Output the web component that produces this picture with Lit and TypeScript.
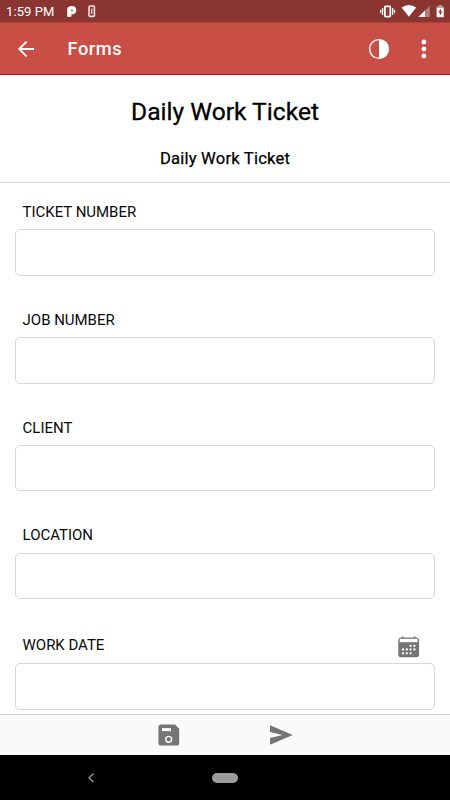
import { LitElement, html, css, svg } from "lit";
import { customElement, property } from "lit/decorators.js";

@customElement("status-bar")
class StatusBar extends LitElement {
  static styles = css`
    :host { display: flex; align-items: center; height: 22px; background: #8b3530; color: #fff; }
    .time { margin-left: 6px; width: 61px; font-size: 13px; line-height: 22px; letter-spacing: 0.1px; padding-top: 1px; white-space: nowrap; }
    svg { display: block; flex: none; }
    .space { flex: 1; }
  `;
  render() {
    return html`
      <span class="time">1:59 PM</span>
      <svg width="34" height="22" viewBox="67 0 34 22">
        <path d="M67.2 16.2V9.5Q67.2 6 71.8 6Q76.3 6 76.3 10Q76.3 14.2 72.2 14.2H71.4V15.9Q71.4 17 70.2 17H68.2Q67.2 17 67.2 16.2Z" fill="#fff"/>
        <path d="M71.2 11.2V10.3Q71.2 9.4 72 9.4Q72.8 9.4 72.8 10.3Q72.8 11.2 72 11.2Z" fill="#8b3530"/>
        <rect x="89" y="6" width="5.4" height="10.4" rx="1" fill="none" stroke="#f0e2e1" stroke-width="1.6"/>
        <path d="M91.7 8.5V14" stroke="#f0e2e1" stroke-width="1.2"/>
      </svg>
      <span class="space"></span>
      <svg width="70" height="22" viewBox="380 0 70 22">
        <rect x="384.9" y="6.4" width="5.4" height="10.2" rx=".6" fill="none" stroke="#fff" stroke-width="1.7"/>
        <path d="M382.6 8V15M392.6 8V15M380.7 9.8V13.2M394.5 9.8V13.2" stroke="#fff" stroke-width="1.3"/>
        <path d="M401.6 7.6Q408.9 2.6 416.2 7.6L408.9 16.8Z" fill="#fff"/>
        <path d="M429.8 5.7V17H418.4Z" fill="#b57c79"/>
        <path d="M425 10.4V17H418.4Z" fill="#fff"/>
        <path d="M436.6 6.6H438.5V5.3H442V6.6H443.8V8H436.6Z" fill="#c9a09e"/>
        <path d="M436.6 8H443.8V17.2H436.6Z" fill="#fff"/>
        <path d="M440.9 8.4L438.2 12.6H439.8V15.8L442.5 11.4H440.9Z" fill="#8b3530"/>
      </svg>
    `;
  }
}

@customElement("app-header")
class AppHeader extends LitElement {
  static styles = css`
    :host { display: flex; align-items: center; box-sizing: border-box; height: 53px; background: #c84e46; border-top: 1px solid #ab433c; border-bottom: 1px solid #c00a0b; color: #fff; padding-left: 15px; }
    svg { display: block; flex: none; }
    .title { flex: 1; margin-left: 30.5px; font-size: 18.3px; font-weight: 500; letter-spacing: 0.5px; line-height: 22px; padding-top: 1px; }
  `;
  render() {
    return html`
      <svg width="22" height="22" viewBox="15 38 22 22" fill="none" stroke="#fff" stroke-width="1.9">
        <path d="M34 49H19.3M26.6 41.6L19.2 49L26.6 56.4"/>
      </svg>
      <span class="title">Forms</span>
      <svg width="82" height="24" viewBox="368 37 82 24">
        <circle cx="379" cy="49" r="9.4" fill="none" stroke="#fff" stroke-width="1.4"/>
        <path d="M379 39.6A9.4 9.4 0 0 1 379 58.4Z" fill="#fff"/>
        <circle cx="423.9" cy="42" r="2.4" fill="#fff"/>
        <circle cx="423.9" cy="49" r="2.4" fill="#fff"/>
        <circle cx="423.9" cy="56" r="2.4" fill="#fff"/>
      </svg>
    `;
  }
}

@customElement("form-field")
class FormField extends LitElement {
  @property() label = "";
  @property({ type: Boolean }) date = false;

  static styles = css`
    :host { display: block; padding: 0 15px; }
    .row { display: flex; align-items: center; height: 35px; padding: 0 15px 0 7.6px; }
    .label { flex: 1; font-size: 15px; letter-spacing: -0.03px; line-height: 18px; padding-top: 0.4px; color: #0a0a0a; }
    .dated .label { padding: 0 0 1px; }
    .icon { display: block; margin-top: 3px; }
    .box { box-sizing: border-box; height: 46.6px; border: 1px solid #d6d6d6; border-radius: 5px; background: #fff; }
  `;
  render() {
    const dots = [
      [410.6, 645.3], [414.4, 645.3],
      [403, 649], [406.8, 649], [410.6, 649], [414.4, 649],
      [403, 652.8], [406.8, 652.8], [410.6, 652.8],
    ];
    return html`
      <div class="row ${this.date ? "dated" : ""}">
        <span class="label">${this.label}</span>
        ${this.date
          ? html`<svg class="icon" width="22" height="22" viewBox="398 635.5 22 22">
              <rect x="398.3" y="637.1" width="20.8" height="19.6" rx="2.8" fill="#757575"/>
              <path d="M402.7 635.9V638M414.6 635.9V638" stroke="#757575" stroke-width="1.5"/>
              <rect x="399.7" y="638.3" width="18" height="3.4" fill="#fff"/>
              ${dots.map(([x, y]) => svg`<circle cx=${x} cy=${y} r="1.15" fill="#fff"/>`)}
            </svg>`
          : null}
      </div>
      <div class="box"></div>
    `;
  }
}

@customElement("app-root")
class AppRoot extends LitElement {
  static styles = css`
    :host { display: flex; flex-direction: column; width: 450px; height: 800px; overflow: hidden; background: #fff; font-family: Roboto, "Liberation Sans", sans-serif; }
    status-bar, app-header, .heading, .actions, .nav { flex: none; }
    .heading { box-sizing: border-box; height: 108px; border-bottom: 1px solid #d9d9d9; text-align: center; color: #000; }
    .title { font-size: 24.6px; font-weight: 400; -webkit-text-stroke: 0.3px #000; line-height: 30px; padding-top: 22px; }
    .subtitle { font-size: 16.6px; font-weight: 400; -webkit-text-stroke: 0.25px #000; letter-spacing: 0.2px; line-height: 20px; padding-top: 22px; }
    .form { flex: 1; min-height: 0; overflow: hidden; display: flex; flex-direction: column; gap: 26.2px; padding-top: 11.3px; }
    .form form-field { flex: none; }
    .last { margin-top: 2.5px; }
    .actions { box-sizing: border-box; height: 41px; display: flex; align-items: center; gap: 87px; padding-left: 157px; background: #fafafa; border-top: 1px solid #d5d5d5; }
    .nav { height: 45px; display: flex; align-items: center; background: #000; padding-left: 86px; }
    .pill { width: 26px; height: 10px; margin-left: 116px; border-radius: 5px; background: #9b9b9b; }
    svg { display: block; }
  `;
  render() {
    return html`
      <status-bar></status-bar>
      <app-header></app-header>
      <div class="heading">
        <div class="title">Daily Work Ticket</div>
        <div class="subtitle">Daily Work Ticket</div>
      </div>
      <div class="form">
        <form-field label="TICKET NUMBER"></form-field>
        <form-field label="JOB NUMBER"></form-field>
        <form-field label="CLIENT"></form-field>
        <form-field label="LOCATION"></form-field>
        <form-field class="last" label="WORK DATE" date></form-field>
      </div>
      <div class="actions">
        <svg width="24" height="24" viewBox="157 723 24 24">
          <path d="M161 724.5H175L179.2 728.7V743Q179.2 745.6 176.6 745.6H161Q158.4 745.6 158.4 743V727.1Q158.4 724.5 161 724.5Z" fill="#757575"/>
          <rect x="162" y="728.1" width="9" height="3" fill="#fff"/>
          <circle cx="168.7" cy="739.3" r="2.9" fill="none" stroke="#fff" stroke-width="1.4"/>
        </svg>
        <svg width="26" height="24" viewBox="268 723 26 24">
          <path d="M270 725.2L292.8 735L270 744.8V737.9L282.5 735L270 732.1Z" fill="#757575"/>
        </svg>
      </div>
      <div class="nav">
        <svg width="10" height="12" viewBox="86 771.5 10 12" fill="none" stroke="#9b9b9b" stroke-width="1.3">
          <path d="M93.5 773L89 777.2L93.5 781.4"/>
        </svg>
        <div class="pill"></div>
      </div>
    `;
  }
}
